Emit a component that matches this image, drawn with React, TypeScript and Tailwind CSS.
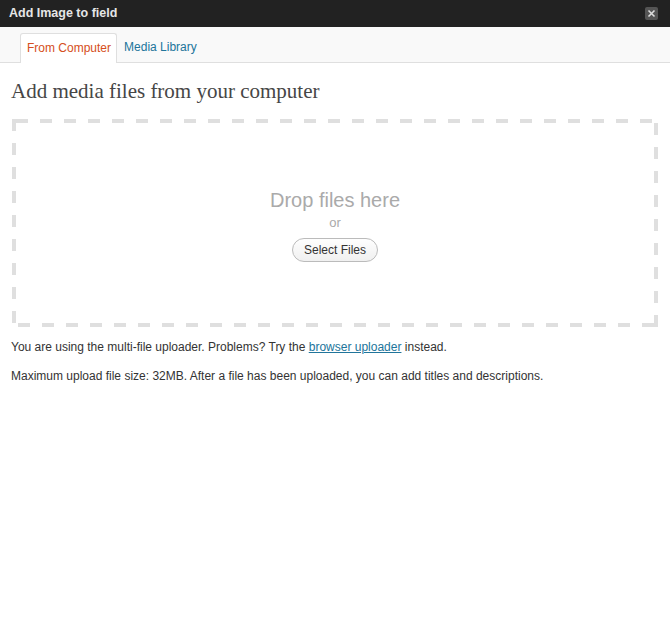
import React from "react";

// Dashed outline of the drop zone, 12px dashes with 12px gaps.
const DropZoneBorder = (): React.JSX.Element => (
  <svg className="pointer-events-none absolute inset-0" width="646" height="208" viewBox="0 0 646 208">
    <g stroke="#dfdfdf" strokeWidth="4" strokeDasharray="12 12" fill="none">
      <path d="M2 0 V208" />
      <path d="M4 2 H646" />
      <path d="M644 208 V0" />
      <path d="M642 206 H0" />
    </g>
  </svg>
);

const App = (): React.JSX.Element => {
  return (
    <div className="flex h-[633px] w-[670px] flex-col bg-white font-['Liberation_Sans',Arial,sans-serif]">
      {/* Title bar. */}
      <div className="flex h-[27px] items-center justify-between bg-[#222222] pl-[9px] pr-[12px]">
        <span className="text-[12.5px] font-bold text-[#e6e6e6]">Add Image to field</span>
        <button className="flex h-[13px] w-[13px] items-center justify-center rounded-[2px] bg-[#555555]">
          <svg width="9" height="9" viewBox="0 0 9 9">
            <path d="M1.5 1.5 L7.5 7.5 M7.5 1.5 L1.5 7.5" stroke="#dddddd" strokeWidth="1.6" />
          </svg>
        </button>
      </div>

      {/* Tabs. */}
      <div className="flex h-[36px] items-end border-b border-[#dfdfdf] bg-[#f9f9f9] pl-[20px]">
        <div className="-mb-px flex h-[30px] items-center rounded-t-[3px] border border-b-0 border-[#dfdfdf] bg-white pb-[2px] pl-[6px] pr-[5px] text-[12px] text-[#d54e21]">
          From Computer
        </div>
        <div className="flex h-[30px] items-center pl-[7px] text-[12px] text-[#21759b]">Media Library</div>
      </div>

      {/* Content. */}
      <div className="px-[12px]">
        <h3 className="-ml-px mt-[16px] font-['Liberation_Serif',Georgia,serif] text-[21px] leading-[24px] text-[#464646]">
          Add media files from your computer
        </h3>
        <div className="relative mt-[16px] flex h-[208px] flex-col items-center justify-center pt-[4px]">
          <DropZoneBorder />
          <p className="text-[20px] leading-[24px] text-[#aaaaaa]">Drop files here</p>
          <p className="text-[13px] leading-[22px] text-[#aaaaaa]">or</p>
          <button className="mt-[4px] h-[24px] rounded-full border border-[#bbbbbb] bg-gradient-to-b from-[#fefefe] to-[#f0f0f0] px-[11px] text-[12px] text-[#333333]">
            Select Files
          </button>
        </div>
        <p className="-ml-px mt-[12px] text-[12px] leading-[16px] text-[#333333]">
          You are using the multi-file uploader. Problems? Try the{" "}
          <a href="#" className="text-[#21759b] underline">
            browser uploader
          </a>{" "}
          instead.
        </p>
        <p className="-ml-px mt-[13px] text-[12px] leading-[16px] text-[#333333]">
          Maximum upload file size: 32MB. After a file has been uploaded, you can add titles and descriptions.
        </p>
      </div>
    </div>
  );
};

export default App;
